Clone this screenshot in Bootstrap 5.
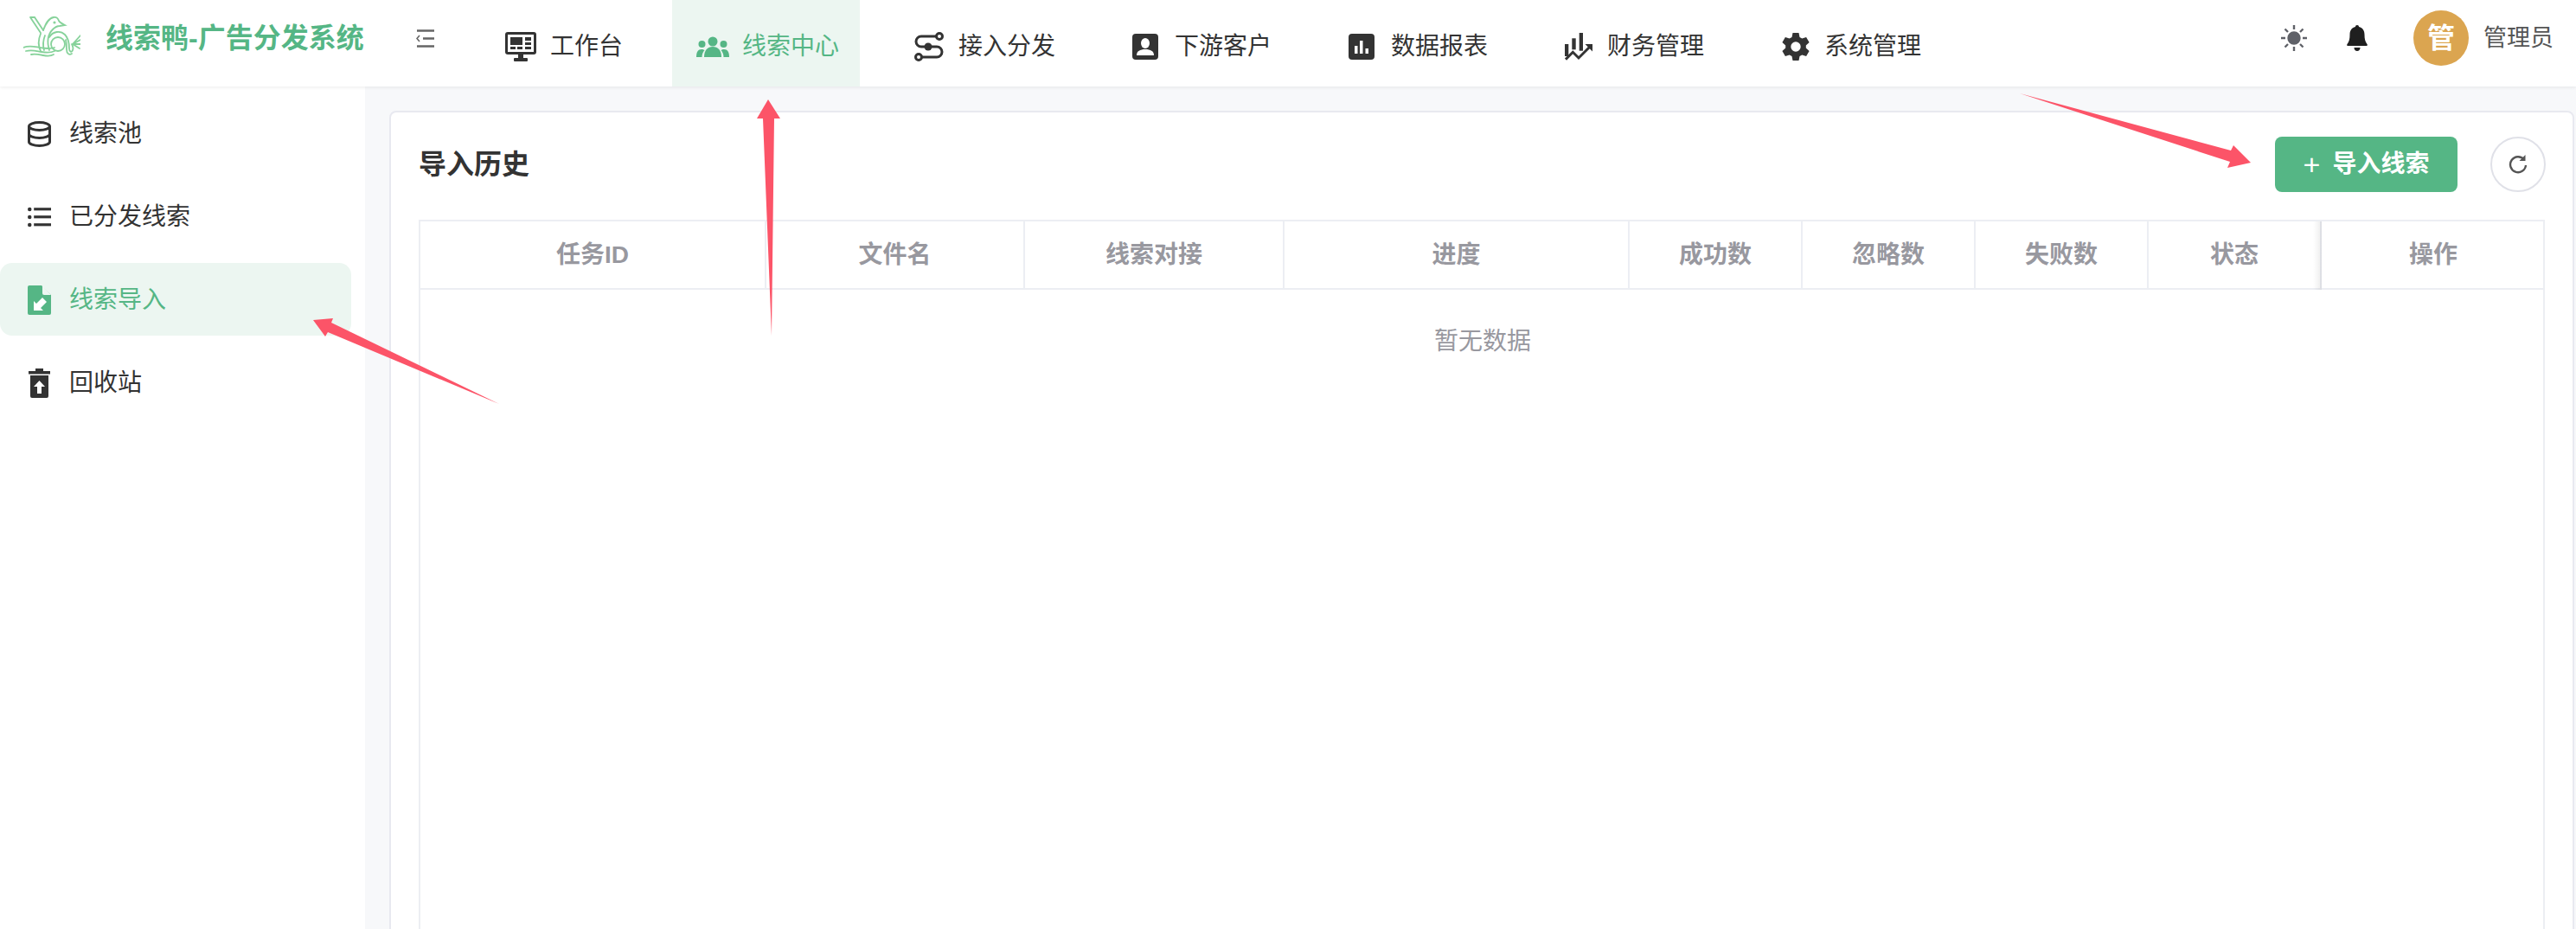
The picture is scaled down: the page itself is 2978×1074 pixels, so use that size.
<!DOCTYPE html>
<html lang="zh-CN">
<head>
    <meta charset="UTF-8">
    <meta name="viewport" content="width=device-width, initial-scale=1.0">
    <title>线索鸭-广告分发系统</title>
    <link href="https://cdn.jsdelivr.net/npm/bootstrap@5.3.0/dist/css/bootstrap.min.css" rel="stylesheet">
    <style>
        body {
            height: 1074px;
            overflow: hidden;
            background-color: #f7f8fa;
            color: #333;
            font-family: "Liberation Sans", "Noto Sans CJK SC", sans-serif;
            font-size: 28px;
        }
        .top-bar {
            height: 100px;
            padding: 0;
            background: #fff;
            box-shadow: 0 1px 4px rgba(0, 0, 0, 0.08);
            position: relative;
            z-index: 2;
        }
        .logo-box { margin: 0 0 17px 27px; width: 66px; height: 48px; flex: none; }
        .brand-name {
            margin: 0 0 12px 29px;
            width: 302px;
            flex: none;
            font-size: 32px;
            font-weight: 700;
            color: #55b685;
            white-space: nowrap;
        }
        .fold-btn { margin-left: 57px; margin-top: -12px; width: 21px; height: 21px; flex: none; }
        .top-menu { margin-left: 54px; gap: 34px; height: 100px; }
        .top-menu .nav-link {
            height: 100px;
            padding: 8px 23px 0 28px;
            color: #333;
            font-size: 28px;
            display: flex;
            align-items: center;
            gap: 16px;
        }
        .top-menu .nav-link.active {
            background: #ecf6f1;
            color: #55b685;
            gap: 15px;
            padding-right: 24px;
        }
        .top-menu .nav-link.wide-pad { padding-right: 27px; }
        .top-menu svg { height: 34px; flex: none; }
        .top-menu svg.square-ico { height: 30px; margin-right: 3px; }
        .top-tools { margin: 0 0 12px auto; }
        .tool-sun { width: 30px; height: 30px; margin-right: 46px; }
        .tool-bell { width: 24px; height: 30px; margin-right: 53px; }
        .user-avatar {
            width: 64px;
            height: 64px;
            border-radius: 50%;
            background: #dba550;
            color: #fff;
            font-size: 32px;
            font-weight: 700;
        }
        .user-name { margin: 0 26px 0 17px; color: #555; font-size: 27px; }
        .page-body { height: 974px; }
        .side-bar {
            width: 422px;
            flex: none;
            background: #fff;
            padding-top: 12px;
            gap: 12px;
        }
        .side-bar .nav-link {
            width: 406px;
            height: 84px;
            padding: 2px 0 0 32px;
            display: flex;
            align-items: center;
            gap: 21px;
            color: #333;
            font-size: 28px;
            border-radius: 14px;
        }
        .side-bar .nav-link.active { background: #ecf6f1; color: #55b685; }
        .side-bar svg { width: 27px; height: 34px; flex: none; }
        .work-area { flex: 1; padding: 28px 2px 0 28px; overflow: hidden; }
        .history-card {
            height: 1000px;
            border: 2px solid #e8e9f0;
            border-radius: 8px;
            padding: 28px 32px 0;
        }
        .history-title { font-size: 32px; font-weight: 700; margin: 0; color: #333; }
        .btn-import {
            width: 211px;
            height: 64px;
            background: #55b685;
            border: 0;
            border-radius: 8px;
            color: #fff;
            font-size: 28px;
            font-weight: 700;
            padding: 0;
        }
        .btn-import:hover { background: #4aa878; color: #fff; }
        .plus-sign { font-size: 34px; font-weight: 400; line-height: 1; margin-right: 14px; }
        .btn-reload {
            width: 64px;
            height: 64px;
            margin-left: 38px;
            padding: 0;
            border: 2px solid #e0e1e8;
            border-radius: 50%;
            background: #fff;
        }
        .head-row { margin: 0 -1px 32px 0; }
        .grid-wrap {
            height: 900px;
            border: 2px solid #eceef3;
            border-bottom: 0;
        }
        .history-table { table-layout: fixed; width: 100%; margin: 0; }
        .history-table > :not(caption) > * > * { padding: 0; box-shadow: none; }
        .history-table th {
            height: 78px;
            text-align: center;
            vertical-align: middle;
            color: #98989f;
            font-size: 28px;
            font-weight: 700;
            border-bottom: 2px solid #eceef3;
            border-right: 2px solid #eceef3;
            position: relative;
        }
        .history-table th:last-child { border-right: 0; }
        .history-table th.fixed-edge::after {
            content: "";
            position: absolute;
            top: 0;
            bottom: -2px;
            right: -2px;
            width: 10px;
            background: linear-gradient(to right, rgba(0, 0, 0, 0), rgba(0, 0, 0, 0.07));
        }
        .history-table td {
            height: 120px;
            text-align: center;
            vertical-align: middle;
            color: #98989f;
            font-size: 28px;
            border: 0;
        }
        .col-w400 { width: 399px; }
        .col-w300 { width: 300px; }
        .col-w299 { width: 299px; }
        .col-w200 { width: 200px; }
        .col-last { width: 259px; }
        .mark-arrows {
            position: absolute;
            left: 0;
            top: 0;
            width: 2978px;
            height: 1074px;
            z-index: 5;
            pointer-events: none;
        }
    </style>
</head>
<body>
    <nav class="navbar top-bar flex-nowrap justify-content-start">
        <svg class="logo-box" viewBox="0 0 66 48" fill="none" stroke="#86d29a" stroke-width="1.800" stroke-linecap="round">
            <path d="M8 2h5l10 15M8 2l12 18"/>
            <path d="M23 17C26 9 29 3 35 2c3-.5 5 1 6 4 1 2 3 3 7 5l-6 1c-3 0-5 1-8 4-6 6-7 14-4 24"/>
            <path d="M20 21c-3 7-3 14 0 20M25 23c-2 5-3 10-1 17"/>
            <circle cx="36" cy="8" r=".7"/>
            <circle cx="40" cy="33" r="8"/>
            <path d="M30 25c4-7 13-8 18-3 4 4 5 10 5 16 0 4 3 5 4 2 1-2 0-5-1-7M49 28c1 4 1 7 1 11 0 5 3 7 6 5"/>
            <path d="M57 33l9-10M57 33l9-5M57 33h9M57 33l8 5"/>
            <path d="M0 37c7-3 13-1 19 0s11 2 17 0M3 41c7-2 12 0 18 1s11 1 15-1M9 45c5-1 9 0 14 1s9 1 12-1"/>
        </svg>
        <div class="brand-name">线索鸭-广告分发系统</div>
        <svg class="fold-btn" viewBox="0 0 21 21" fill="none" stroke="#666" stroke-width="2.400">
            <path d="M1 1.500h20M8 10.500h13M1 19.500h20"/>
            <path d="M4 7l-3 3.500 3 3.500" stroke-width="1.600"/>
        </svg>
        <ul class="nav top-menu flex-nowrap">
            <li class="nav-item">
                <a class="nav-link" href="#">
                    <svg width="36" viewBox="0 0 36 34"><rect x="0" y="0" width="36" height="26" rx="3" fill="#333"/><rect x="3" y="3" width="30" height="20" fill="#fff"/><rect x="6" y="6" width="14" height="9" fill="#333"/><rect x="23" y="6" width="7" height="4" fill="#333"/><rect x="23" y="12" width="7" height="3" fill="#333"/><rect x="6" y="17" width="6" height="3" fill="#333"/><rect x="14" y="17" width="6" height="3" fill="#333"/><rect x="23" y="17" width="7" height="3" fill="#333"/><rect x="15" y="26" width="6" height="5" fill="#333"/><rect x="10" y="30" width="16" height="4" rx="1" fill="#333"/></svg>
                    工作台
                </a>
            </li>
            <li class="nav-item">
                <a class="nav-link active" href="#">
                    <svg width="38" viewBox="0 0 38 24" fill="#55b685"><circle cx="19" cy="6" r="5.500"/><circle cx="6.500" cy="9" r="4"/><circle cx="31.500" cy="9" r="4"/><path d="M9 24c0-8 4-12 10-12s10 4 10 12z"/><path d="M0 24c0-6 2-9 6-9 1.500 0 2.500.5 3.500 1-2 2-3 5-3 8zM38 24c0-6-2-9-6-9-1.500 0-2.500.5-3.500 1 2 2 3 5 3 8z"/></svg>
                    线索中心
                </a>
            </li>
            <li class="nav-item">
                <a class="nav-link wide-pad" href="#">
                    <svg width="36" viewBox="0 0 36 34" fill="none" stroke="#333" stroke-width="3"><path d="M26.500 5H9a6 6 0 0 0 0 12h18a6 6 0 0 1 0 12H9.500"/><circle cx="30" cy="5" r="3.500"/><circle cx="6" cy="29" r="3.500"/><circle cx="17" cy="17" r="4.500" fill="#333" stroke="none"/></svg>
                    接入分发
                </a>
            </li>
            <li class="nav-item">
                <a class="nav-link wide-pad" href="#">
                    <svg class="square-ico" width="30" viewBox="0 0 30 30"><rect width="30" height="30" rx="4" fill="#333"/><ellipse cx="15" cy="11" rx="5" ry="6" fill="#fff"/><path d="M5 25c0-5 4-7 10-7s10 2 10 7z" fill="#fff"/></svg>
                    下游客户
                </a>
            </li>
            <li class="nav-item">
                <a class="nav-link wide-pad" href="#">
                    <svg class="square-ico" width="30" viewBox="0 0 30 30"><rect width="30" height="30" rx="4" fill="#333"/><rect x="7" y="14" width="3.500" height="9" fill="#fff"/><rect x="13" y="8" width="3.500" height="15" fill="#fff"/><rect x="19.500" y="17" width="3.500" height="6" fill="#fff"/></svg>
                    数据报表
                </a>
            </li>
            <li class="nav-item">
                <a class="nav-link wide-pad" href="#">
                    <svg width="33" viewBox="0 0 33 32" fill="#333"><rect x="0" y="13" width="4.300" height="14"/><rect x="8.300" y="6.300" width="4.400" height="13"/><rect x="16.700" y="0" width="4.300" height="20.700"/><path d="M1 30.700l8.300-8.400 6.700 6.700 13-13" fill="none" stroke="#333" stroke-width="3"/><path d="M23.500 13H32v8.500z"/></svg>
                    财务管理
                </a>
            </li>
            <li class="nav-item">
                <a class="nav-link" href="#">
                    <svg width="34" viewBox="0 0 34 34" fill="#333"><path fill-rule="evenodd" d="M13.500 1h7l1 5 2.800 1.600 4.800-1.600 3.500 6-3.800 3.400v3.200l3.800 3.400-3.500 6-4.800-1.600-2.800 1.600-1 5h-7l-1-5-2.800-1.600-4.800 1.600-3.500-6 3.800-3.400v-3.200L1.400 12l3.500-6 4.800 1.600L12.500 6zM17 11.300a5.700 5.700 0 1 0 0 11.400 5.700 5.700 0 0 0 0-11.400z"/></svg>
                    系统管理
                </a>
            </li>
        </ul>
        <div class="top-tools d-flex align-items-center">
            <svg class="tool-sun" viewBox="0 0 30 30" fill="#5f6168" stroke="#5f6168" stroke-width="2.400"><circle cx="15" cy="15" r="6.500"/><path d="M15 0v5M15 25v5M0 15h5M25 15h5M4.500 4.500L8 8M22 22l3.500 3.500M4.500 25.500L8 22M22 8l3.500-3.500" fill="none"/></svg>
            <svg class="tool-bell" viewBox="0 0 24 30" fill="#1f1f1f"><path d="M12 0c1.300 0 2 .8 2 2 4.500 1 6.500 4.500 6.500 9 0 5 .7 8 3 11 .7 1 .2 2-1 2H1.500c-1.200 0-1.700-1-1-2 2.300-3 3-6 3-11 0-4.500 2-8 6.500-9 0-1.200.7-2 2-2z"/><path d="M8.500 26h7c0 2.500-1.500 4-3.500 4s-3.500-1.500-3.500-4z"/></svg>
            <div class="user-avatar d-flex align-items-center justify-content-center">管</div>
            <span class="user-name">管理员</span>
        </div>
    </nav>

    <div class="d-flex page-body">
        <ul class="nav flex-column flex-nowrap side-bar">
            <li class="nav-item">
                <a class="nav-link" href="#">
                    <svg viewBox="0 0 27 30" fill="none" stroke="#333" stroke-width="3"><ellipse cx="13.500" cy="6" rx="12" ry="4.500"/><path d="M1.500 6v18c0 2.500 5.500 4.500 12 4.500s12-2 12-4.500V6M1.500 15c0 2.500 5.500 4.500 12 4.500s12-2 12-4.500"/></svg>
                    线索池
                </a>
            </li>
            <li class="nav-item">
                <a class="nav-link" href="#">
                    <svg viewBox="0 0 30 26" fill="#333"><circle cx="2.500" cy="3" r="2.500"/><circle cx="2.500" cy="13" r="2.500"/><circle cx="2.500" cy="23" r="2.500"/><rect x="8" y="1" width="22" height="3.500"/><rect x="8" y="11" width="22" height="3.500"/><rect x="8" y="21" width="22" height="3.500"/></svg>
                    已分发线索
                </a>
            </li>
            <li class="nav-item">
                <a class="nav-link active" href="#">
                    <svg viewBox="0 0 27 34"><path d="M2 0h14l11 11v21a2 2 0 0 1-2 2H2a2 2 0 0 1-2-2V2a2 2 0 0 1 2-2z" fill="#55b685"/><path d="M17 0v9a2 2 0 0 0 2 2h8z" fill="#ecf6f1"/><path d="M21 15l-7 7-3-3v11h11l-3-3 7-7z" fill="#fff" transform="translate(-4 -1)"/></svg>
                    线索导入
                </a>
            </li>
            <li class="nav-item">
                <a class="nav-link" href="#">
                    <svg viewBox="0 0 27 34" fill="#333"><rect x="1" y="3" width="25" height="3.500"/><rect x="9" y="0" width="9" height="3"/><path d="M3 8h21v24a2 2 0 0 1-2 2H5a2 2 0 0 1-2-2z"/><path d="M13.500 14l6.500 7h-4v8h-5v-8H7z" fill="#fff"/></svg>
                    回收站
                </a>
            </li>
        </ul>

        <main class="work-area">
            <div class="card history-card">
                <div class="d-flex align-items-center head-row">
                    <h5 class="history-title me-auto">导入历史</h5>
                    <button type="button" class="btn btn-import d-flex align-items-center justify-content-center"><span class="plus-sign">+</span>导入线索</button>
                    <button type="button" class="btn btn-reload d-flex align-items-center justify-content-center">
                        <svg width="22" height="24" viewBox="0 0 22 24" fill="none" stroke="#555" stroke-width="2.400"><path d="M18 6.500A9 9 0 1 0 20 13"/><path d="M19.500 1v7h-7z" fill="#555" stroke="none"/></svg>
                    </button>
                </div>
                <div class="grid-wrap">
                    <table class="table history-table">
                        <colgroup>
                            <col class="col-w400"><col class="col-w299"><col class="col-w300"><col class="col-w400">
                            <col class="col-w200"><col class="col-w200"><col class="col-w200"><col class="col-w200"><col class="col-last">
                        </colgroup>
                        <thead>
                            <tr>
                                <th>任务ID</th><th>文件名</th><th>线索对接</th><th>进度</th>
                                <th>成功数</th><th>忽略数</th><th>失败数</th><th class="fixed-edge">状态</th><th>操作</th>
                            </tr>
                        </thead>
                        <tbody>
                            <tr><td colspan="9">暂无数据</td></tr>
                        </tbody>
                    </table>
                </div>
            </div>
        </main>
    </div>

    <!-- 标注箭头 -->
    <svg class="mark-arrows" viewBox="0 0 2978 1074" fill="#fc5468">
        <polygon points="888,115 902,137 895,137 892,388 882,137 875,137"/>
        <polygon points="2335,108 2579,174 2582,168 2602,188 2575,194 2578,187"/>
        <polygon points="362,370 385,368 383,373 577,467 379,384 376,389"/>
    </svg>

    <script src="https://cdn.jsdelivr.net/npm/bootstrap@5.3.0/dist/js/bootstrap.bundle.min.js"></script>
</body>
</html>
